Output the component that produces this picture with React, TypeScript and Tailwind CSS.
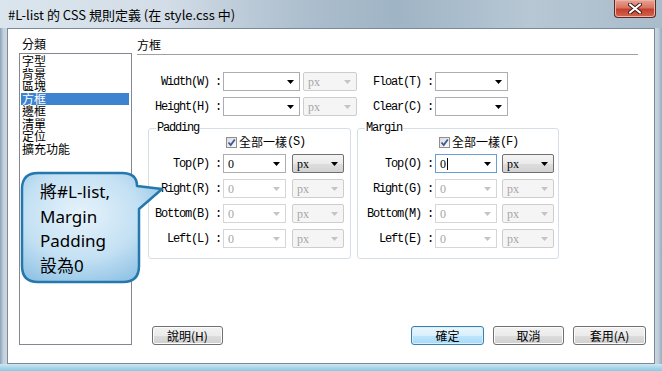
import React from 'react';

const MONO = "font-['Liberation_Mono',monospace] text-[12px] tracking-[-1.2px] text-black";
const CJK = "font-['Noto_Sans_CJK_TC','Noto_Sans',sans-serif]";
const VAL = "font-['Liberation_Serif',serif] text-[12px]";

type ComboState = 'edit' | 'focus' | 'drop' | 'off' | 'offDrop';

const comboStyles: Record<ComboState, string> = {
  edit: 'border-[#abadb3] bg-white text-black',
  focus: 'border-[#6a9fd4] bg-white text-black',
  drop: 'border-[#707070] rounded-[2px] bg-[linear-gradient(to_bottom,#f4f4f4_0%,#ebebeb_50%,#dedede_51%,#d2d2d2_100%)] text-black',
  off: 'border-[#d6d6d6] bg-white text-[#a6a6a6]',
  offDrop: 'border-[#cdcdcd] rounded-[2px] bg-[#f5f5f5] text-[#a6a6a6]',
};

function Arrow({ on }: { on: boolean }) {
  return (
    <svg width="7" height="4" viewBox="0 0 7 4" className="shrink-0">
      <path d="M0 0H7L3.5 4Z" fill={on ? '#000000' : '#c4c4c4'} />
    </svg>
  );
}

function Combo({ className, value, state }: { className: string; value?: string; state: ComboState }) {
  const on = state === 'edit' || state === 'focus' || state === 'drop';
  return (
    <div className={`h-[19px] border flex items-center pl-[4px] pr-[5px] ${comboStyles[state]} ${className}`}>
      <span className={`${VAL} leading-none`}>{value}</span>
      {state === 'focus' && <span className="ml-[1px] w-px h-[12px] bg-black" />}
      <span className="flex-1" />
      <Arrow on={on} />
    </div>
  );
}

function Checkbox() {
  return (
    <span className="w-[11px] h-[11px] border border-[#8e8f8f] bg-gradient-to-br from-[#dcdcdc] to-[#fbfbfb] flex items-center justify-center">
      <svg width="9" height="9" viewBox="0 0 9 9">
        <path d="M1.5 4.5L3.7 7L7.8 1.5" stroke="#3b5998" strokeWidth="1.8" fill="none" />
      </svg>
    </span>
  );
}

function Group({ legend, check, checkPad, labelW, c1, c2, gap, rows }: {
  legend: string;
  check: string;
  checkPad: string;
  labelW: string;
  c1: string;
  c2: string;
  gap: string;
  rows: { label: string; on: boolean; focus?: boolean }[];
}) {
  return (
    <div className="h-[131px] border border-[#d5dfe5] rounded-[3px] w-full">
      <div className={`-mt-[8px] ml-[7px] px-[1px] w-fit bg-white leading-[14px] ${MONO}`}>{legend}</div>
      <div className={`h-[14px] flex items-center ${checkPad}`}>
        <Checkbox />
        <span className={`ml-[2px] text-[12px] leading-none ${CJK}`}>全部一樣</span>
        <span className={`${MONO} leading-none`}>{check}</span>
      </div>
      <div className="mt-[5px] flex flex-col gap-[6px]">
        {rows.map((r) => (
          <div key={r.label} className="flex items-center h-[19px]">
            <span className={`${labelW} text-right whitespace-pre ${MONO}`}>{r.label}</span>
            <Combo className={`ml-[2px] ${c1}`} value="0" state={r.on ? (r.focus ? 'focus' : 'edit') : 'off'} />
            <Combo className={`${gap} ${c2}`} value="px" state={r.on ? 'drop' : 'offDrop'} />
          </div>
        ))}
      </div>
    </div>
  );
}

function Button({ label, className, primary }: { label: React.ReactNode; className: string; primary?: boolean }) {
  return (
    <div
      className={`h-[19px] rounded-[3px] border flex items-center justify-center text-[12px] leading-none text-black ${CJK} ${
        primary
          ? 'border-[#3c7fb1] bg-[linear-gradient(to_bottom,#eaf6fd_0%,#d9f0fc_50%,#bee6fd_51%,#a7d9f5_100%)] shadow-[inset_0_0_0_1px_#d7eefb]'
          : 'border-[#707070] bg-[linear-gradient(to_bottom,#f2f2f2_0%,#ebebeb_50%,#dddddd_51%,#cfcfcf_100%)] shadow-[inset_0_0_0_1px_#fbfbfb]'
      } ${className}`}
    >
      {label}
    </div>
  );
}

const categories = ['字型', '背景', '區塊', '方框', '邊框', '清單', '定位', '擴充功能'];

export default function App() {
  return (
    <div className="relative w-[662px] h-[371px] overflow-hidden flex flex-col bg-[#b8c9d7]">
      {/* Title bar */}
      <div className="h-[28px] flex items-start bg-[linear-gradient(to_right,#dbe5ed_0%,#d2dde7_25%,#aebfce_45%,#9fb4c5_60%,#b7c7d4_80%,#a9bccb_100%)]">
        <div className={`pl-[8px] pt-[6px] leading-[18px] text-[13px] text-black ${CJK}`}>
          #L-list 的 CSS 規則定義 (在 style.css 中)
        </div>
        <div className="flex-1" />
        <div className="mr-[6px] w-[42px] h-[18px] rounded-b-[4px] border border-t-0 border-[#5b2a26] bg-[linear-gradient(to_bottom,#e7a596_0%,#d8735f_45%,#c4402e_55%,#d2664e_100%)] flex items-center justify-center shadow-[inset_0_0_0_1px_#eeb3a5]">
          <svg width="14" height="11" viewBox="0 0 14 11">
            <path d="M2 1.5L12 9.5M12 1.5L2 9.5" stroke="#3c1a18" strokeWidth="4" strokeLinecap="round" />
            <path d="M2 1.5L12 9.5M12 1.5L2 9.5" stroke="#ffffff" strokeWidth="2.2" strokeLinecap="round" />
          </svg>
        </div>
      </div>

      {/* Middle: frame + client */}
      <div className="flex-1 flex">
        <div className="w-[7px] bg-gradient-to-r from-[#8ca3b6] via-[#c2d1dd] to-[#cbd8e3]" />
        <div className="w-[648px] h-[336px] border border-[#7b8996] bg-white flex">
          {/* Left column */}
          <div className="ml-[11px] w-[113px] pt-[7px]">
            <div className={`h-[16px] leading-[16px] pl-[3px] text-[12px] text-black ${CJK}`}>分類</div>
            <div className="mt-[1px] h-[292px] border border-[#828790] p-[1px]">
              {categories.map((c) => (
                <div
                  key={c}
                  className={`h-[12.5px] leading-[12.5px] pl-[1px] text-[12px] ${CJK} ${
                    c === '方框' ? 'bg-[#3d83cf] text-white mr-[1px]' : 'text-black'
                  }`}
                >
                  {c}
                </div>
              ))}
            </div>
          </div>

          {/* Right column */}
          <div className="ml-[5px] w-[509px] pt-[8px]">
            <div className={`h-[18px] mr-[8px] border-b border-[#a0a0a0] text-[12px] leading-[16px] text-black ${CJK}`}>方框</div>

            <div className="mt-[17px] flex flex-col gap-[6px]">
              <div className="flex items-center h-[19px]">
                <span className={`w-[84px] text-right whitespace-pre ${MONO}`}>Width(W) :</span>
                <Combo className="ml-[2px] w-[77px]" state="edit" />
                <Combo className="ml-[3px] w-[54px]" value="px" state="offDrop" />
                <span className={`w-[76px] text-right whitespace-pre ${MONO}`}>Float(T) :</span>
                <Combo className="ml-[2px] w-[73px]" state="edit" />
              </div>
              <div className="flex items-center h-[19px]">
                <span className={`w-[84px] text-right whitespace-pre ${MONO}`}>Height(H) :</span>
                <Combo className="ml-[2px] w-[77px]" state="edit" />
                <Combo className="ml-[3px] w-[54px]" value="px" state="offDrop" />
                <span className={`w-[76px] text-right whitespace-pre ${MONO}`}>Clear(C) :</span>
                <Combo className="ml-[2px] w-[73px]" state="edit" />
              </div>
            </div>

            <div className="mt-[12px] ml-[11px] flex gap-[6px]">
              <div className="w-[203px]">
                <Group
                  legend="Padding"
                  check="(S)"
                  checkPad="pl-[77px]"
                  labelW="w-[72px]"
                  c1="w-[63px]"
                  c2="w-[52px]"
                  gap="ml-[6px]"
                  rows={[
                    { label: 'Top(P) :', on: true },
                    { label: 'Right(R) :', on: false },
                    { label: 'Bottom(B) :', on: false },
                    { label: 'Left(L) :', on: false },
                  ]}
                />
              </div>
              <div className="w-[202px]">
                <Group
                  legend="Margin"
                  check="(F)"
                  checkPad="pl-[81px]"
                  labelW="w-[75px]"
                  c1="w-[62px]"
                  c2="w-[52px]"
                  gap="ml-[5px]"
                  rows={[
                    { label: 'Top(O) :', on: true, focus: true },
                    { label: 'Right(G) :', on: false },
                    { label: 'Bottom(M) :', on: false },
                    { label: 'Left(E) :', on: false },
                  ]}
                />
              </div>
            </div>

            <div className="mt-[67px] flex">
              <Button className="ml-[15px] w-[71px]" label="說明(H)" />
              <Button className="ml-[188px] w-[73px]" label="確定" primary />
              <Button className="ml-[9px] w-[71px]" label="取消" />
              <Button className="ml-[9px] w-[73px]" label="套用(A)" />
            </div>
          </div>
        </div>
        <div className="w-[7px] bg-gradient-to-r from-[#cbd8e3] via-[#bccbd8] to-[#98adbf]" />
      </div>

      {/* Bottom frame */}
      <div className="h-[7px] bg-gradient-to-b from-[#d3e6f1] via-[#a9d8ea] to-[#86cbe4]" />

      {/* Callout */}
      <svg className="absolute left-0 top-0 pointer-events-none" width="662" height="371" viewBox="0 0 662 371">
        <defs>
          <radialGradient id="bub" cx="0.42" cy="0.38" r="0.75">
            <stop offset="0" stopColor="#e6f3fb" />
            <stop offset="0.55" stopColor="#c3e0f3" />
            <stop offset="1" stopColor="#86bde2" />
          </radialGradient>
        </defs>
        <path
          d="M38 173H122Q137 173 137 186L162 189L139 209V266Q139 282 123 282H38Q22 282 22 266V189Q22 173 38 173Z"
          fill="url(#bub)"
          stroke="#2478ad"
          strokeWidth="2.5"
          strokeLinejoin="round"
        />
      </svg>
      <div className="absolute left-[40px] top-[180px] text-[17px] leading-[24.5px] text-black font-['Noto_Sans','Noto_Sans_CJK_TC',sans-serif]">
        <div>將#L-list,</div>
        <div>Margin</div>
        <div>Padding</div>
        <div>設為0</div>
      </div>
    </div>
  );
}
